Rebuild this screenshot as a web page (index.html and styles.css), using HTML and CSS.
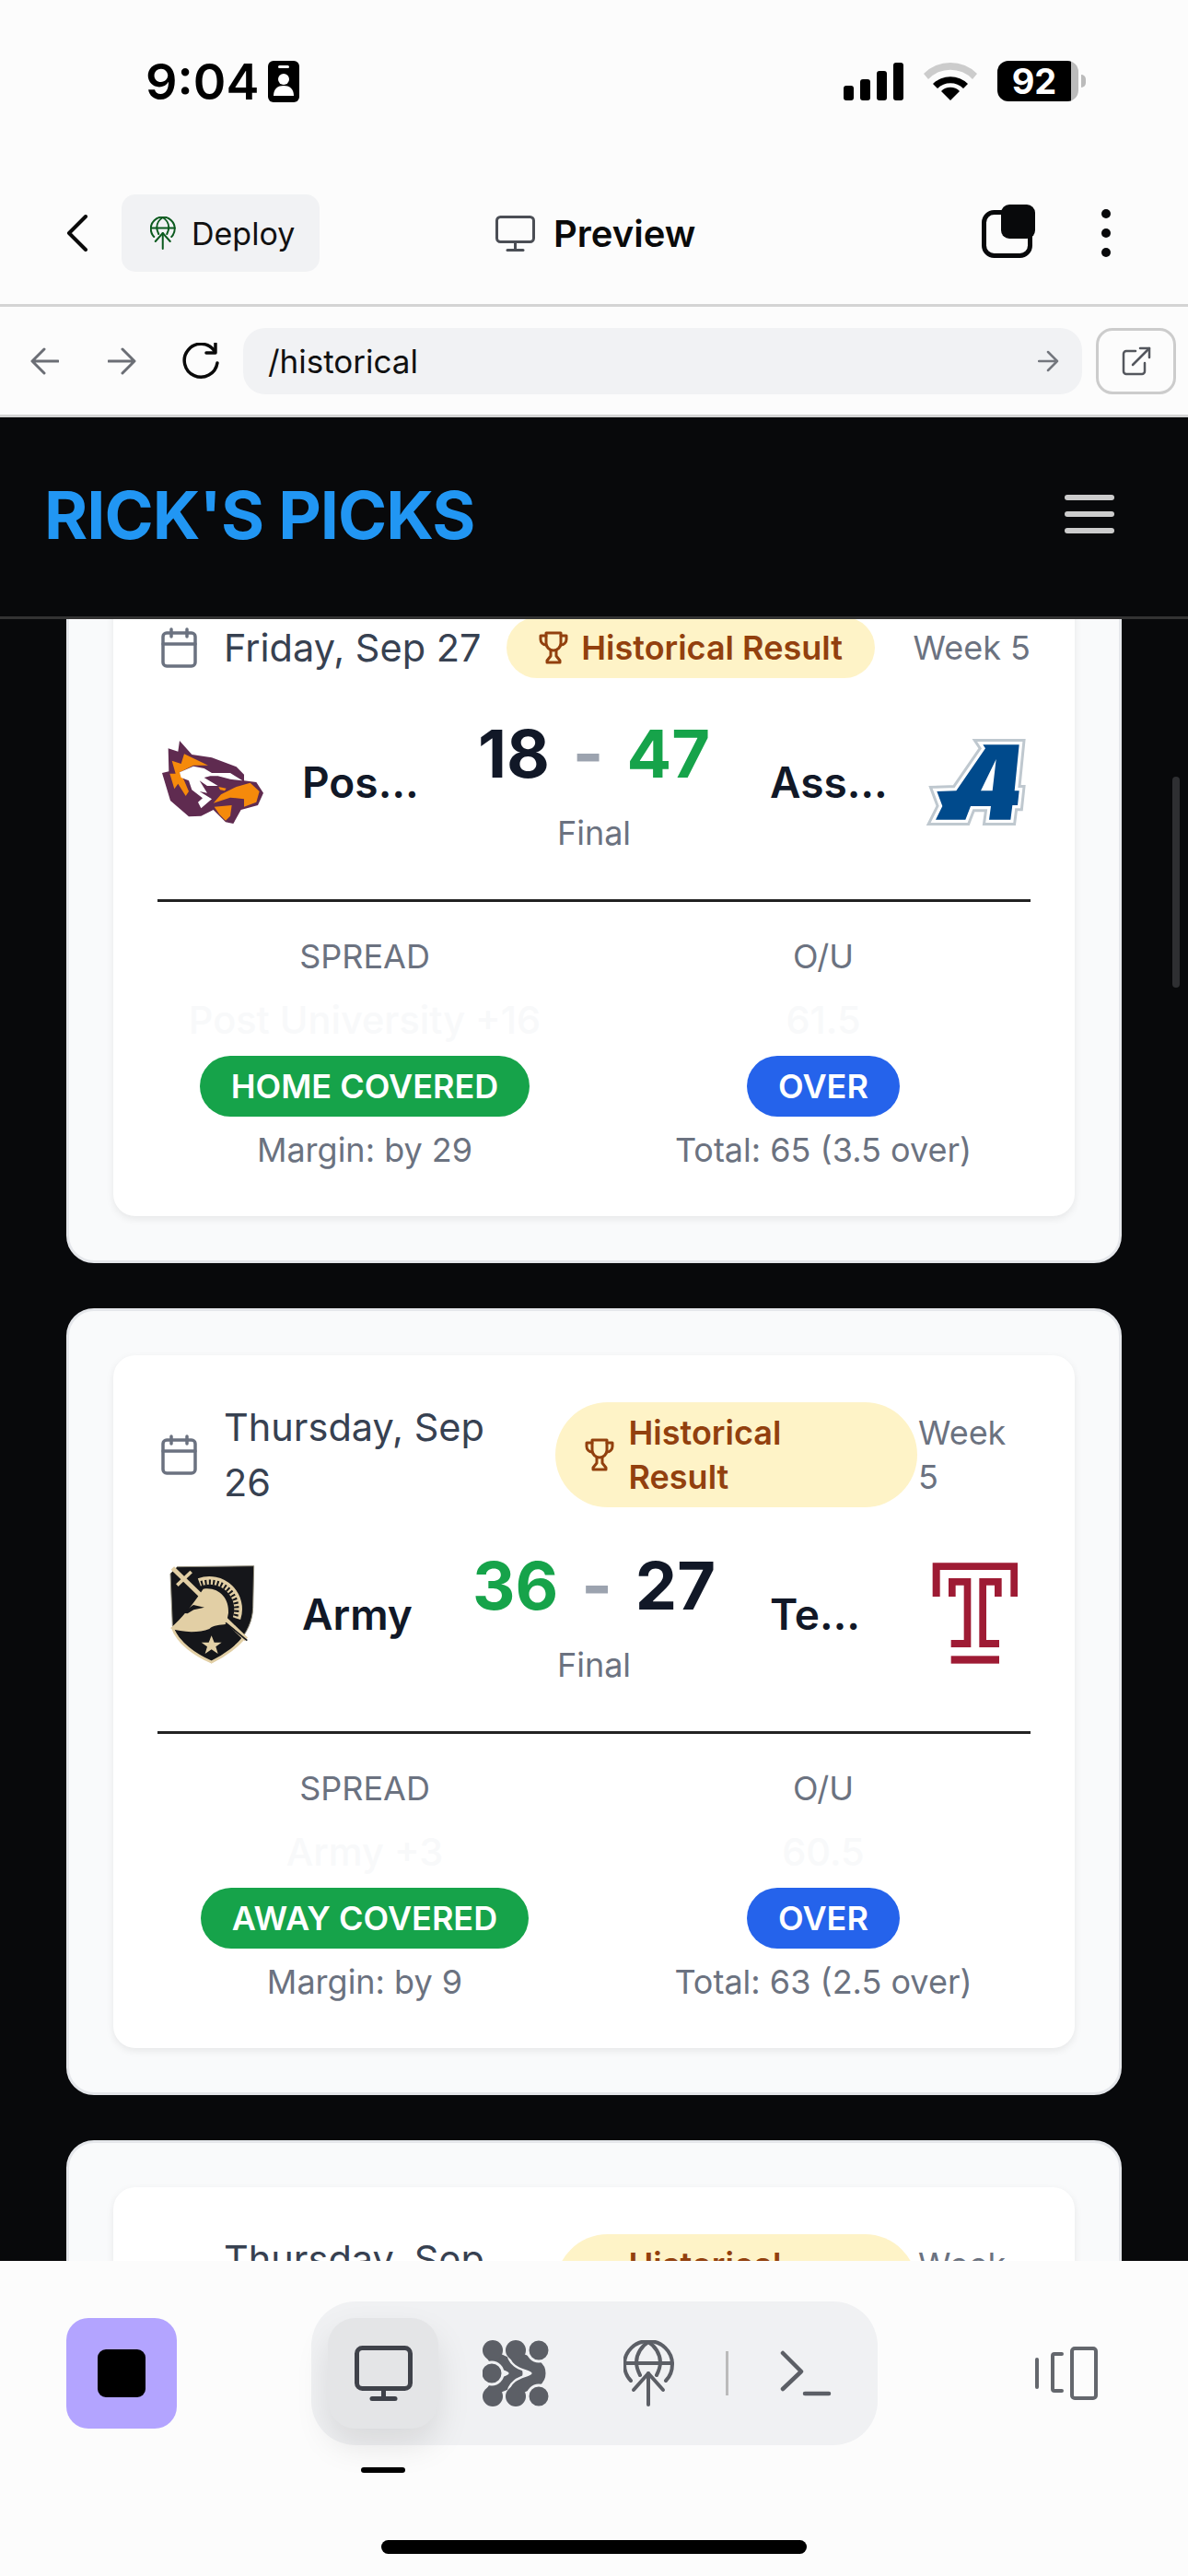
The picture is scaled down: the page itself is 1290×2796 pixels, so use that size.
FILE: index.html
```html
<!DOCTYPE html>
<html lang="en">
<head>
    <meta charset="UTF-8">
    <title>Rick's Picks - Preview</title>
    <link rel="stylesheet" href="styles.css">
</head>
<body>
    <svg class="defs" width="0" height="0">
        <symbol id="globe-up" viewBox="0 0 55 72">
            <g fill="none" stroke="currentColor" stroke-width="4" stroke-linecap="round" stroke-linejoin="round">
                <path d="M8 44C3 39 1 33 1 26a26 25 0 0 1 52 0c0 7-2 13-7 18"/>
                <path d="M18 38c-3-6-4-9-4-14 0-9 6-18 13-22 7 4 13 13 13 22 0 5-1 8-4 14"/>
                <path d="M2 25h51"/>
                <path d="M27 70V36"/>
                <path d="M11 54l16-18 16 18"/>
            </g>
        </symbol>
        <symbol id="trophy" viewBox="0 0 32 36">
            <g fill="none" stroke="currentColor" stroke-width="3" stroke-linecap="round" stroke-linejoin="round">
                <path d="M8 2h16v11a8 8 0 0 1-16 0z"/>
                <path d="M8 5H2v4a6 6 0 0 0 6 6"/>
                <path d="M24 5h6v4a6 6 0 0 1-6 6"/>
                <path d="M13 21v6l-4 5v2h14v-2l-4-5v-6"/>
            </g>
        </symbol>
        <symbol id="calendar" viewBox="0 0 39 44">
            <g fill="none" stroke="#6b7280" stroke-width="3.5" stroke-linecap="round">
                <rect x="2" y="6" width="35" height="36" rx="4"/>
                <path d="M2 18h35"/>
                <path d="M11 2v8"/>
                <path d="M28 2v8"/>
            </g>
        </symbol>
    </svg>

    <header class="phone-top">
        <div class="status">
            <div class="status-left">
                <span class="clock">9:04</span>
                <svg width="34" height="45" viewBox="0 0 34 45">
                    <rect width="34" height="45" rx="6" fill="#000"/>
                    <rect x="11" y="5" width="12" height="3" rx="1.5" fill="#fff"/>
                    <circle cx="17" cy="20" r="6" fill="#fff"/>
                    <path d="M6 38c0-8 5-11 11-11s11 3 11 11z" fill="#fff"/>
                </svg>
            </div>
            <div class="status-right">
                <svg width="65" height="41" viewBox="0 0 65 41">
                    <rect x="0" y="25" width="11" height="16" rx="3"/>
                    <rect x="18" y="18" width="11" height="23" rx="3"/>
                    <rect x="36" y="9" width="11" height="32" rx="3"/>
                    <rect x="54" y="0" width="11" height="41" rx="3"/>
                </svg>
                <svg width="58" height="42" viewBox="0 0 58 42">
                    <path d="M0 13a41 41 0 0 1 58 0l-5 6a33 33 0 0 0-48 0z" fill="#ccc"/>
                    <path d="M10 24a27 27 0 0 1 38 0l-5 5a20 20 0 0 0-28 0z"/>
                    <path d="M19 32a14 14 0 0 1 20 0L29 42z"/>
                </svg>
                <div class="battery">
                    <div class="battery-body">92</div>
                    <div class="battery-nub"></div>
                </div>
            </div>
        </div>
        <div class="appbar">
            <svg class="back" width="24" height="40" viewBox="0 0 24 40">
                <path d="M21 2L3 20l18 18" fill="none" stroke="#0a0a0a" stroke-width="4" stroke-linecap="round" stroke-linejoin="round"/>
            </svg>
            <div class="deploy">
                <svg class="deploy-icon" width="28" height="36"><use href="#globe-up"/></svg>
                <span>Deploy</span>
            </div>
            <div class="preview-title">
                <svg width="43" height="39" viewBox="0 0 43 39">
                    <g fill="none" stroke="#4b4e55" stroke-width="3" stroke-linecap="round">
                        <rect x="1.5" y="1.5" width="40" height="27" rx="4"/>
                        <path d="M21.5 29v8"/>
                        <path d="M13 37.5h17"/>
                    </g>
                </svg>
                <span>Preview</span>
            </div>
            <svg class="tabs" width="58" height="58" viewBox="0 0 58 58">
                <rect x="2.5" y="8.500" width="50" height="47" rx="11" fill="none" stroke="#08090b" stroke-width="5"/>
                <rect x="21" y="0" width="37" height="37" rx="9" fill="#08090b"/>
            </svg>
            <svg class="more" width="10" height="52" viewBox="0 0 10 52">
                <circle cx="5" cy="5" r="5"/>
                <circle cx="5" cy="26" r="5"/>
                <circle cx="5" cy="47" r="5"/>
            </svg>
        </div>
    </header>

    <div class="urlbar">
        <svg class="url-arrow" width="31" height="30" viewBox="0 0 31 30">
            <path d="M30 15H2M15 2L2 15l13 13" fill="none" stroke="#6b6e75" stroke-width="3" stroke-linecap="round" stroke-linejoin="round"/>
        </svg>
        <svg class="url-arrow" width="31" height="30" viewBox="0 0 31 30">
            <path d="M1 15h28M16 2l13 13-13 13" fill="none" stroke="#6b6e75" stroke-width="3" stroke-linecap="round" stroke-linejoin="round"/>
        </svg>
        <svg class="reload" width="43" height="40" viewBox="0 0 43 40">
            <path d="M37 9a18 18 0 1 0 3 13" fill="none" stroke="#0a0a0a" stroke-width="3.500" stroke-linecap="round"/>
            <path d="M38 1v10H28" fill="none" stroke="#0a0a0a" stroke-width="3.500" stroke-linecap="round" stroke-linejoin="round"/>
        </svg>
        <div class="url-input">
            <span>/historical</span>
            <svg width="23" height="24" viewBox="0 0 23 24">
                <path d="M1 12h20M11 2l10 10-10 10" fill="none" stroke="#74777e" stroke-width="2.500" stroke-linecap="round" stroke-linejoin="round"/>
            </svg>
        </div>
        <div class="open-btn">
            <svg width="32" height="32" viewBox="0 0 32 32">
                <g fill="none" stroke="#54575e" stroke-width="2.500" stroke-linecap="round" stroke-linejoin="round">
                    <path d="M15 5H5a3 3 0 0 0-3 3v19a3 3 0 0 0 3 3h17a3 3 0 0 0 3-3V18"/>
                    <path d="M12 20L30 2"/>
                    <path d="M20 2h10v10"/>
                </g>
            </svg>
        </div>
    </div>

    <nav class="site-nav">
        <a class="brand">RICK'S PICKS</a>
        <div class="burger"><span></span><span></span><span></span></div>
    </nav>

    <main class="viewport">
        <div class="scrollbar"></div>
        <div class="game-list">
            <section class="game-card">
                <div class="game-inner">
                    <div class="game-head">
                        <div class="game-date">
                            <svg width="39" height="44"><use href="#calendar"/></svg>
                            <span>Friday, Sep 27</span>
                        </div>
                        <div class="result-pill">
                            <svg width="32" height="36"><use href="#trophy"/></svg>
                            <span>Historical Result</span>
                        </div>
                        <div class="game-week">Week 5</div>
                    </div>
                    <div class="matchup">
                        <div class="team">
                            <svg class="logo" viewBox="63 30 360 360">
                                <path fill="#5f2b50" d="M135 75l40 45 65 10 80 30 25 25v20l40 5 23 35-18 40-55 15-25 45-25-5-40-40-40 20-40 2-60-52-27-90 22-5-2-75 32 10z"/>
                                <path fill="#f58a0b" d="M150 118l78 37h-48l-45 23 15 27 15 35-10 15-25-40-12 17-15-50h19l-12-42 30 10z"/>
                                <path fill="#fff" d="M135 178l45-20 35 7 25 15h60l40 25-40-5-40-10h-25l-20 5 45 27h-35l-25-17 25 40-25-5 40 25-35 30-10-20 15-13-35-27-10-30-25-10z"/>
                                <path fill="#f58a0b" d="M262 225l25 5-5 8-15-3z"/>
                                <path fill="#f58a0b" d="M320 225l45-13 30 28-10 35-40 15v-25l-45-5-55 18 25-28z"/>
                                <path fill="#f58a0b" d="M248 290l57-5-5 35-15 15-20-20z"/>
                            </svg>
                            <span class="team-name">Post University</span>
                        </div>
                        <div class="score-box">
                            <div class="score"><span class="pts">18</span><span class="dash">-</span><span class="pts win">47</span></div>
                            <div class="score-state">Final</div>
                        </div>
                        <div class="team team-right">
                            <span class="team-name">Assumption</span>
                            <svg class="logo" viewBox="57 30 360 360">
                                <g stroke-linejoin="miter">
                                    <path fill="#bfc8cf" stroke="#bfc8cf" stroke-width="38" d="M262 88h118l-15 150h15l-5 47h-17l-6 47h-70l6-44h-66l-17 44H108l22-44-18-48 63-2 95-138z"/>
                                    <path fill="#fff" stroke="#fff" stroke-width="20" d="M262 88h118l-15 150h15l-5 47h-17l-6 47h-70l6-44h-66l-17 44H108l22-44-18-48 63-2 95-138z"/>
                                    <path fill="#004a8c" fill-rule="evenodd" d="M262 88h118l-15 150h15l-5 47h-17l-6 47h-70l6-44h-66l-17 44H108l22-44-18-48 63-2 95-138zM305 135l-50 103h38z"/>
                                </g>
                            </svg>
                        </div>
                    </div>
                    <div class="lines">
                        <div class="line-col">
                            <div class="line-label">SPREAD</div>
                            <div class="line-value">Post University +16</div>
                            <div class="badge badge-green">HOME COVERED</div>
                            <div class="line-note">Margin: by 29</div>
                        </div>
                        <div class="line-col">
                            <div class="line-label">O/U</div>
                            <div class="line-value">61.5</div>
                            <div class="badge badge-blue">OVER</div>
                            <div class="line-note">Total: 65 (3.5 over)</div>
                        </div>
                    </div>
                </div>
            </section>

            <section class="game-card">
                <div class="game-inner">
                    <div class="game-head">
                        <div class="game-date game-date-wrap">
                            <svg width="39" height="44"><use href="#calendar"/></svg>
                            <span>Thursday, Sep 26</span>
                        </div>
                        <div class="result-pill result-pill-wrap">
                            <svg width="32" height="36"><use href="#trophy"/></svg>
                            <span>Historical Result</span>
                        </div>
                        <div class="game-week game-week-wrap">Week 5</div>
                    </div>
                    <div class="matchup">
                        <div class="team">
                            <svg class="logo" viewBox="36 42 360 360">
                                <path fill="#15161a" stroke="#8f8a78" stroke-width="3" d="M100 68l250-3-3 135c-2 90-77 150-135 180-62-30-117-80-127-120L78 90z"/>
                                <path fill="none" stroke="#e2cfa5" stroke-width="9" d="M85 265c15 50 75 90 127 113 45-22 90-55 110-85"/>
                                <path fill="none" stroke="#e2cfa5" stroke-width="26" d="M172 118a94 94 0 0 1 122 118"/>
                                <path fill="none" stroke="#15161a" stroke-width="16" stroke-dasharray="6 7" d="M178 122a88 88 0 0 1 112 108"/>
                                <path fill="none" stroke="#e2cfa5" stroke-width="15" d="M85 72l240 232"/>
                                <path fill="none" stroke="#e2cfa5" stroke-width="11" d="M100 128l46-44"/>
                                <path fill="#e2cfa5" d="M185 140c50-8 85 30 82 78l-7 36c-20 4-42 2-55 16-35 14-92 12-127-2 35-30 75-80 107-128z"/>
                                <path fill="#15161a" d="M115 218l38-26 36 8-35 8-20 12z"/>
                                <path fill="none" stroke="#15161a" stroke-width="5" d="M258 250l70 58"/>
                                <path fill="#e2cfa5" d="M212 292l9 22h24l-19 14 7 23-21-14-21 14 7-23-19-14h24z"/>
                            </svg>
                            <span class="team-name">Army</span>
                        </div>
                        <div class="score-box">
                            <div class="score"><span class="pts win">36</span><span class="dash">-</span><span class="pts">27</span></div>
                            <div class="score-state">Final</div>
                        </div>
                        <div class="team team-right">
                            <span class="team-name">Temple</span>
                            <svg class="logo" viewBox="27 42 360 360">
                                <g fill="#9e1b34">
                                    <path d="M68 55h277v110h-23V78H92v87H68z"/>
                                    <path d="M120 105h73v225h-65v-24h42V128h-27v37h-23z"/>
                                    <path d="M220 105h73v60h-23v-37h-27v178h42v24h-65z"/>
                                    <rect x="128" y="358" width="157" height="25"/>
                                </g>
                            </svg>
                        </div>
                    </div>
                    <div class="lines">
                        <div class="line-col">
                            <div class="line-label">SPREAD</div>
                            <div class="line-value">Army +3</div>
                            <div class="badge badge-green">AWAY COVERED</div>
                            <div class="line-note">Margin: by 9</div>
                        </div>
                        <div class="line-col">
                            <div class="line-label">O/U</div>
                            <div class="line-value">60.5</div>
                            <div class="badge badge-blue">OVER</div>
                            <div class="line-note">Total: 63 (2.5 over)</div>
                        </div>
                    </div>
                </div>
            </section>

            <section class="game-card">
                <div class="game-inner">
                    <div class="game-head">
                        <div class="game-date game-date-wrap">
                            <svg width="39" height="44"><use href="#calendar"/></svg>
                            <span>Thursday, Sep 26</span>
                        </div>
                        <div class="result-pill result-pill-wrap">
                            <svg width="32" height="36"><use href="#trophy"/></svg>
                            <span>Historical Result</span>
                        </div>
                        <div class="game-week game-week-wrap">Week 5</div>
                    </div>
                </div>
            </section>
        </div>
    </main>

    <footer class="dock">
        <div class="dock-row">
            <div class="stop-btn"><span></span></div>
            <div class="dock-mid">
                <div class="dock-group">
                    <div class="dock-item active">
                        <svg width="63" height="60" viewBox="0 0 63 60">
                            <g fill="none" stroke="#3f424a" stroke-width="5" stroke-linecap="round">
                                <rect x="2.500" y="2.500" width="58" height="44" rx="6"/>
                                <path d="M31.500 47v10"/>
                                <path d="M19 57.500h25"/>
                            </g>
                        </svg>
                    </div>
                    <div class="dock-item">
                        <svg width="72" height="72" viewBox="0 0 72 72">
                            <g fill="none" stroke-linecap="round">
                                <path stroke="#5c5f66" stroke-width="15" d="M11 12c0 16 25 10 25 24S11 44 11 60"/>
                                <path stroke="#f0f1f3" stroke-width="20" d="M36 12c0 16 25 10 25 24S36 44 36 60"/>
                                <path stroke="#5c5f66" stroke-width="15" d="M36 12c0 16 25 10 25 24S36 44 36 60"/>
                            </g>
                            <g fill="#5c5f66" stroke="#f0f1f3" stroke-width="3">
                                <ellipse cx="61" cy="11" rx="12" ry="12"/>
                                <ellipse cx="61" cy="61" rx="12" ry="12"/>
                                <ellipse cx="10" cy="36" rx="12" ry="12"/>
                            </g>
                            <g fill="#5c5f66">
                                <ellipse cx="11" cy="11" rx="11" ry="11"/>
                                <ellipse cx="11" cy="61" rx="11" ry="11"/>
                                <ellipse cx="36" cy="11" rx="11" ry="11"/>
                                <ellipse cx="36" cy="61" rx="11" ry="11"/>
                            </g>
                        </svg>
                    </div>
                    <div class="dock-item dock-globe">
                        <svg width="55" height="72"><use href="#globe-up"/></svg>
                    </div>
                    <div class="dock-sep"></div>
                    <div class="dock-item">
                        <svg width="56" height="50" viewBox="0 0 56 50">
                            <g fill="none" stroke="#5c5f66" stroke-width="4.500" stroke-linecap="round" stroke-linejoin="round">
                                <path d="M3 3l20 20L3 42"/>
                                <path d="M27 47h26"/>
                            </g>
                        </svg>
                    </div>
                </div>
                <div class="dock-indicator"></div>
            </div>
            <svg class="device-toggle" width="68" height="58" viewBox="0 0 68 58">
                <g fill="none" stroke="#64676d" stroke-width="4" stroke-linecap="round" stroke-linejoin="round">
                    <rect x="40" y="2" width="26" height="54" rx="3"/>
                    <path d="M29 8h-8a2 2 0 0 0-2 2v36a2 2 0 0 0 2 2h8"/>
                    <path d="M2 14v30"/>
                </g>
            </svg>
        </div>
        <div class="home-bar"></div>
    </footer>
</body>
</html>
```

FILE: styles.css
```css
* {
    box-sizing: border-box;
}
body {
    margin: 0;
    width: 1290px;
    height: 2796px;
    display: flex;
    flex-direction: column;
    overflow: hidden;
    font-family: Inter, "Liberation Sans", sans-serif;
    background: #fcfcfc;
    color: #0a0a0a;
}
.defs {
    position: absolute;
}

/* phone chrome */
.phone-top {
    height: 330px;
    flex: none;
}
.status {
    height: 176px;
    padding: 0 111px 0 158px;
    display: flex;
    justify-content: space-between;
    align-items: center;
}
.status-left {
    display: flex;
    align-items: center;
    gap: 10px;
}
.clock {
    font-size: 54px;
    font-weight: 600;
    color: #000;
}
.status-right {
    display: flex;
    align-items: center;
    gap: 22px;
}
.battery {
    display: flex;
    align-items: center;
    gap: 3px;
}
.battery-body {
    width: 88px;
    height: 44px;
    border-radius: 12px;
    background: linear-gradient(to right, #000 80px, #bbb 80px);
    color: #fff;
    font-size: 38px;
    font-weight: 700;
    line-height: 44px;
    text-align: center;
    padding-right: 8px;
}
.battery-nub {
    width: 5px;
    height: 14px;
    border-radius: 0 5px 5px 0;
    background: #bbb;
}
.appbar {
    height: 154px;
    padding-left: 72px;
    display: flex;
    align-items: center;
}
.back {
    flex: none;
}
.deploy {
    margin-left: 36px;
    width: 215px;
    height: 84px;
    border-radius: 15px;
    background: #f1f2f4;
    display: flex;
    align-items: center;
    gap: 17px;
    padding-left: 31px;
    font-size: 34px;
    color: #111;
}
.deploy-icon {
    color: #0b5a1e;
}
.preview-title {
    margin-left: 191px;
    display: flex;
    align-items: center;
    gap: 20px;
    font-size: 40px;
    font-weight: 600;
}
.tabs {
    margin-left: 311px;
    margin-top: -4px;
}
.more {
    margin-left: 72px;
    fill: #08090b;
}

.urlbar {
    height: 123px;
    flex: none;
    border-top: 3px solid #d4d4d4;
    border-bottom: 3px solid #d4d4d4;
    padding: 0 13px 0 33px;
    display: flex;
    align-items: center;
}
.url-arrow + .url-arrow {
    margin-left: 53px;
}
.reload {
    margin-left: 48px;
}
.url-input {
    margin-left: 25px;
    width: 912px;
    height: 72px;
    border-radius: 24px;
    background: #f1f2f4;
    padding: 0 25px 0 27px;
    display: flex;
    justify-content: space-between;
    align-items: center;
    font-size: 35px;
    color: #111;
}
.open-btn {
    margin-left: 15px;
    width: 87px;
    height: 72px;
    border: 3px solid #ccc;
    border-radius: 18px;
    display: flex;
    justify-content: center;
    align-items: center;
}

/* site header */
.site-nav {
    height: 219px;
    flex: none;
    background: #08090b;
    border-bottom: 3px solid #333;
    padding: 0 80px 6px 48px;
    display: flex;
    justify-content: space-between;
    align-items: center;
}
.brand {
    font-size: 72px;
    font-weight: 700;
    letter-spacing: -1px;
    color: #2196f3;
}
.burger {
    width: 54px;
    display: flex;
    flex-direction: column;
    gap: 12px;
}
.burger span {
    height: 6px;
    border-radius: 3px;
    background: #ccc;
}

.viewport {
    flex: 1;
    min-height: 0;
    overflow: hidden;
    background: #08090b;
    position: relative;
}
.scrollbar {
    position: absolute;
    top: 171px;
    right: 9px;
    width: 8px;
    height: 229px;
    border-radius: 4px;
    background: #2e2f32;
}
.game-list {
    margin-top: -101px;
    padding: 0 72px;
    display: flex;
    flex-direction: column;
    gap: 49px;
}

/* cards */
.game-card {
    background: #f9fafb;
    border: 3px solid #e5e7eb;
    border-radius: 30px;
    padding: 48px;
}
.game-inner {
    background: #fff;
    border-radius: 24px;
    box-shadow: 0 3px 9px rgba(0, 0, 0, 0.08);
    padding: 48px;
}
.game-head {
    display: flex;
    justify-content: space-between;
    align-items: center;
    margin-bottom: 34px;
}
.game-date {
    display: flex;
    align-items: center;
    gap: 29px;
    padding-left: 4px;
    font-size: 41.500px;
    line-height: 60px;
    color: #374151;
}
.game-date svg,
.result-pill svg {
    flex: none;
}
.game-date-wrap {
    width: 430px;
}
.game-date-wrap span {
    width: 300px;
}
.result-pill {
    display: flex;
    align-items: center;
    gap: 14px;
    margin-right: 14px;
    padding: 9px 35px;
    border-radius: 999px;
    background: #fef3c7;
    color: #92400e;
    font-size: 36px;
    font-weight: 600;
    line-height: 48px;
    white-space: nowrap;
}
.result-pill-wrap {
    width: 393px;
    margin-right: 0;
    padding-left: 32px;
    gap: 16px;
    white-space: normal;
}
.result-pill-wrap span {
    width: 200px;
}
.game-week {
    font-size: 36px;
    line-height: 48px;
    color: #6b7280;
    white-space: nowrap;
}
.game-week-wrap {
    width: 122px;
    white-space: normal;
}
.matchup {
    display: flex;
    align-items: center;
    padding-bottom: 48px;
    border-bottom: 3px solid #222;
}
.team {
    width: 290px;
    flex: none;
    display: flex;
    align-items: center;
    gap: 37px;
}
.team-right {
    gap: 30px;
    padding-left: 7px;
}
.logo {
    width: 120px;
    height: 120px;
    flex: none;
}
.team-name {
    width: 133px;
    flex: none;
    font-size: 46px;
    font-weight: 600;
    color: #111827;
    white-space: nowrap;
    overflow: hidden;
    text-overflow: ellipsis;
}
.score-box {
    flex: 1;
    text-align: center;
}
.score {
    display: flex;
    justify-content: center;
    gap: 25px;
    font-size: 72px;
    font-weight: 700;
    line-height: 96px;
    color: #111827;
}
.dash {
    color: #9ca3af;
}
.win {
    color: #16a34a;
}
.score-state {
    margin-top: 14px;
    font-size: 36px;
    line-height: 48px;
    color: #6b7280;
}
.lines {
    padding-top: 35px;
    display: grid;
    grid-template-columns: 1fr 1fr;
    gap: 48px;
}
.line-col {
    display: flex;
    flex-direction: column;
    align-items: center;
    gap: 12px;
}
.line-label,
.line-note {
    font-size: 36px;
    line-height: 48px;
    color: #6b7280;
}
.line-value {
    margin: 3px 0 -3px;
    font-size: 41.500px;
    font-weight: 500;
    line-height: 60px;
    color: #f8f9fa;
}
.badge {
    height: 66px;
    padding: 0 34px;
    border-radius: 999px;
    color: #fff;
    font-size: 36px;
    font-weight: 600;
    line-height: 66px;
}
.badge-green {
    background: #16a34a;
}
.badge-blue {
    background: #2563eb;
}

/* bottom dock */
.dock {
    height: 342px;
    flex: none;
    padding-top: 44px;
    background: #fcfcfc;
    position: relative;
}
.dock-row {
    padding: 0 98px 0 72px;
    display: flex;
    align-items: flex-start;
}
.stop-btn {
    margin-top: 18px;
    width: 120px;
    height: 120px;
    border-radius: 24px;
    background: #b3a4ff;
    display: flex;
    justify-content: center;
    align-items: center;
}
.stop-btn span {
    width: 52px;
    height: 52px;
    border-radius: 9px;
    background: #000;
}
.dock-mid {
    margin-left: 146px;
    width: 615px;
}
.dock-group {
    height: 156px;
    border-radius: 48px;
    background: #f0f1f3;
    padding: 18px;
    display: flex;
    align-items: center;
    gap: 24px;
}
.dock-item {
    width: 120px;
    height: 120px;
    flex: none;
    border-radius: 30px;
    display: flex;
    justify-content: center;
    align-items: center;
}
.dock-item.active {
    background: #e4e5e7;
    box-shadow: 0 18px 36px rgba(0, 0, 0, 0.1);
}
.dock-globe {
    color: #5c5f66;
}
.dock-sep {
    width: 3px;
    height: 48px;
    flex: none;
    background: #bbb;
}
.dock-indicator {
    margin: 24px 0 0 54px;
    width: 48px;
    height: 6px;
    border-radius: 3px;
    background: #000;
}
.device-toggle {
    margin: 49px 0 0 171px;
}
.home-bar {
    margin: 73px auto 0;
    width: 462px;
    height: 15px;
    border-radius: 8px;
    background: #000;
}
```
